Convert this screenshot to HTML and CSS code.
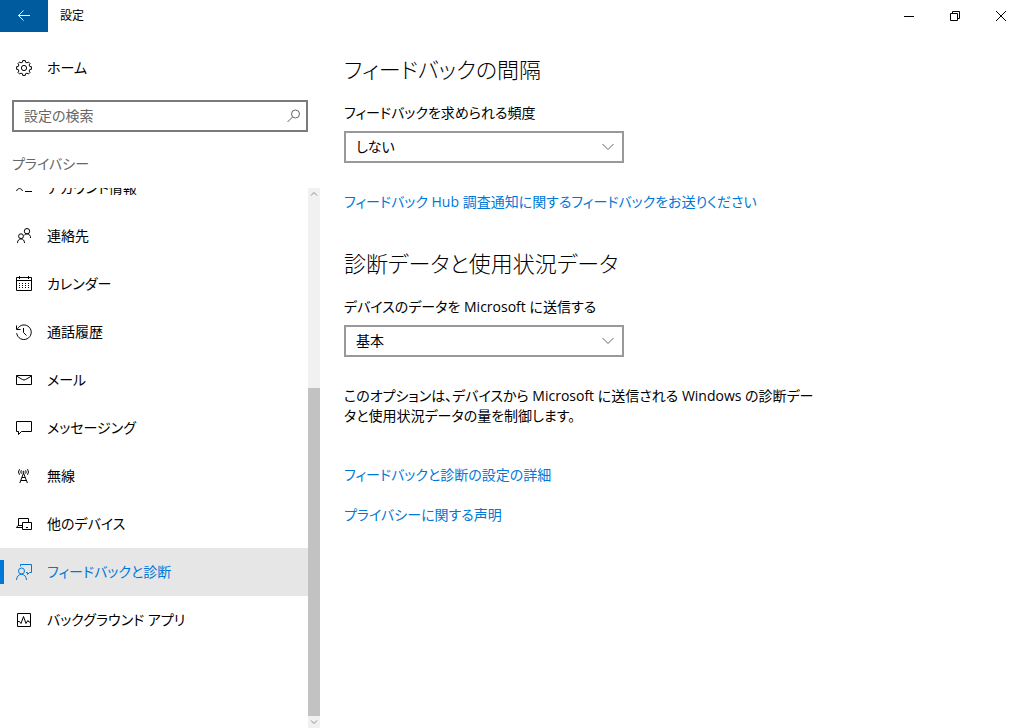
FILE: index.html
```html
<!DOCTYPE html>
<html lang="ja">
<head>
    <meta charset="UTF-8">
    <meta name="viewport" content="width=device-width, initial-scale=1.0">
    <title>設定</title>
    <link rel="stylesheet" href="styles.css">
</head>
<body>
    <header class="titlebar">
        <button type="button" class="back" aria-label="戻る">
            <svg width="16" height="16" viewBox="0 0 16 16"><path d="M14 7.5H2.5M7.5 2.5l-5 5 5 5"/></svg>
        </button>
        <h1 class="title">設定</h1>
        <div class="window-buttons">
            <button type="button" aria-label="最小化">
                <svg width="10" height="10" viewBox="0 0 10 10"><path d="M0 5.5h10"/></svg>
            </button>
            <button type="button" aria-label="元に戻す">
                <svg width="10" height="10" viewBox="0 0 10 10"><path d="M.5 2.5h7v7h-7zM2.5 2V.5h7v7H8"/></svg>
            </button>
            <button type="button" aria-label="閉じる">
                <svg width="10" height="10" viewBox="0 0 10 10"><path d="M0 0l10 10M10 0L0 10"/></svg>
            </button>
        </div>
    </header>

    <div class="layout">
        <aside class="sidebar">
            <a class="nav-item home" href="#">
                <svg class="icon" viewBox="0 0 16 16"><path d="M15.4 6.7V9.3L13.8 9.5 13.1 11.1 14.1 12.3 12.3 14.1 11.1 13.1 9.5 13.8 9.3 15.4H6.7L6.5 13.8 4.9 13.1 3.7 14.1 1.9 12.3 2.9 11.1 2.2 9.5.6 9.3V6.7L2.2 6.5 2.9 4.9 1.9 3.7 3.7 1.9 4.9 2.9 6.5 2.2 6.7.6H9.3L9.5 2.2 11.1 2.9 12.3 1.9 14.1 3.7 13.1 4.9 13.8 6.5Z"/><circle cx="8" cy="8" r="2.6"/></svg>
                <span>ホーム</span>
            </a>

            <form class="search">
                <input type="text" placeholder="設定の検索" aria-label="設定の検索">
                <button type="submit" aria-label="検索">
                    <svg width="14" height="14" viewBox="0 0 14 14"><circle cx="8.5" cy="5" r="4"/><path d="M5.6 7.9L.5 13"/></svg>
                </button>
            </form>

            <h2 class="group-title">プライバシー</h2>

            <div class="nav-area">
                <nav class="nav-list">
                    <a class="nav-item" href="#">
                        <svg class="icon" viewBox="0 0 16 16"><circle cx="3.5" cy="5" r="2.5"/><path d="M.5 11C1.5 7.8 5.5 7.8 6.5 11M9 3.5h7M9 7.5h7M9 11.5h7"/></svg>
                        <span>アカウント情報</span>
                    </a>
                    <a class="nav-item" href="#">
                        <svg class="icon" viewBox="0 0 16 16"><circle cx="5" cy="8.2" r="2.4"/><path d="M1.5 15C1.5 9.5 8.5 9.5 8.5 15"/><circle cx="11" cy="3.2" r="2.7"/><path d="M8 7.5C9.5 5.2 14.5 5 14.6 10"/></svg>
                        <span>連絡先</span>
                    </a>
                    <a class="nav-item" href="#">
                        <svg class="icon" viewBox="0 0 16 16"><path d="M.5 1.5h15v13H.5zM.5 4.5h15M3.5 0v3M12.5 0v3"/><path stroke-dasharray="1 2" d="M3 7.5h10M3 9.5h10M3 11.5h10"/></svg>
                        <span>カレンダー</span>
                    </a>
                    <a class="nav-item" href="#">
                        <svg class="icon" viewBox="0 0 16 16"><path d="M1.5 4.8A7.3 7.3 0 1 1 .7 9.2M.5 1.5v4h4M7.5 4v4.5l3 3"/></svg>
                        <span>通話履歴</span>
                    </a>
                    <a class="nav-item" href="#">
                        <svg class="icon" viewBox="0 0 16 16"><path d="M.5 3.5h15v9H.5zM.5 4L6.5 7.6Q8 8.3 9.5 7.6L15.5 4"/></svg>
                        <span>メール</span>
                    </a>
                    <a class="nav-item" href="#">
                        <svg class="icon" viewBox="0 0 16 16"><path d="M.5 1.5h15v10H5.5l-3 3v-3h-2z"/></svg>
                        <span>メッセージング</span>
                    </a>
                    <a class="nav-item" href="#">
                        <svg class="icon" viewBox="0 0 16 16"><path d="M7.5 5L3.8 15M7.5 5l3.9 10M6 9.5h3M5 12.5h5.5M3.5 1.2Q1.5 4 3.5 6.8M11.5 1.2Q13.5 4 11.5 6.8M5.4 2.3Q4.2 4 5.4 5.7M9.6 2.3Q10.8 4 9.6 5.7"/><circle cx="7.5" cy="4" r=".7"/></svg>
                        <span>無線</span>
                    </a>
                    <a class="nav-item" href="#">
                        <svg class="icon" viewBox="0 0 16 16"><path d="M2.5 9V2.5h10V6M6 9.5H2L.5 11.5H6M6.5 6.5h9v7h-9zM10 11.5h2"/></svg>
                        <span>他のデバイス</span>
                    </a>
                    <a class="nav-item active" href="#" aria-current="page">
                        <svg class="icon" viewBox="0 0 16 16"><circle cx="5.5" cy="7" r="3"/><path d="M.5 16C.8 8.4 10.2 8.4 10.5 16M4.5 2.5v-2h11v8h-2l-2 2v-2h-1.5"/></svg>
                        <span>フィードバックと診断</span>
                    </a>
                    <a class="nav-item" href="#">
                        <svg class="icon" viewBox="0 0 16 16"><path d="M1.5 1.5h13v13h-13zM2 9.5h1.5l1.5 2 2.5-7 2.5 7 1.8-3 1 1.5H14"/></svg>
                        <span>バックグラウンド アプリ</span>
                    </a>
                </nav>
                <div class="scrollbar" aria-hidden="true">
                    <svg class="scroll-arrow" viewBox="0 0 12 12"><path d="M3 7.5l3-3 3 3"/></svg>
                    <div class="scroll-track">
                        <div class="scroll-thumb"></div>
                    </div>
                    <svg class="scroll-arrow" viewBox="0 0 12 12"><path d="M3 4.5l3 3 3-3"/></svg>
                </div>
            </div>
        </aside>

        <main class="content">
            <section>
                <h2>フィードバックの間隔</h2>
                <label for="frequency">フィードバックを求められる頻度</label>
                <div class="dropdown">
                    <select id="frequency">
                        <option>しない</option>
                    </select>
                    <svg class="chevron" viewBox="0 0 12 8"><path d="M.5 1L6 6.5 11.5 1"/></svg>
                </div>
                <a class="link spaced" href="#">フィードバック Hub 調査通知に関するフィードバックをお送りください</a>
            </section>

            <section>
                <h2>診断データと使用状況データ</h2>
                <label for="device-data">デバイスのデータを Microsoft に送信する</label>
                <div class="dropdown">
                    <select id="device-data">
                        <option>基本</option>
                    </select>
                    <svg class="chevron" viewBox="0 0 12 8"><path d="M.5 1L6 6.5 11.5 1"/></svg>
                </div>
                <p class="spaced">このオプションは、デバイスから Microsoft に送信される Windows の診断デー<br>タと使用状況データの量を制御します。</p>
            </section>

            <div class="more-links">
                <a class="link" href="#">フィードバックと診断の設定の詳細</a>
                <a class="link" href="#">プライバシーに関する声明</a>
            </div>
        </main>
    </div>
</body>
</html>
```
FILE: styles.css
```css
* {
    box-sizing: border-box;
}
body {
    display: flex;
    flex-direction: column;
    height: 100vh;
    margin: 0;
    overflow: hidden;
    background-color: #fff;
    color: #000;
    font-family: "Open Sans", "Noto Sans CJK JP", sans-serif;
    font-size: 14px;
    line-height: 20px;
    font-feature-settings: "palt";
}
h1,
h2,
p {
    margin: 0;
    font-weight: 400;
}
a {
    color: inherit;
    text-decoration: none;
}
button {
    padding: 0;
    border: none;
    background: none;
    color: inherit;
}
input,
select {
    color: inherit;
    font: inherit;
    font-feature-settings: inherit;
}
svg {
    display: block;
    flex: none;
    fill: none;
    stroke: currentColor;
    stroke-width: 1;
}

/* title bar */
.titlebar {
    display: flex;
    flex: none;
    align-items: center;
    height: 32px;
}
.back {
    display: flex;
    align-items: center;
    justify-content: center;
    width: 48px;
    height: 32px;
    background-color: #005a9e;
    color: #fff;
}
.title {
    margin-left: 12px;
    font-size: 12px;
}
.window-buttons {
    display: flex;
    margin-left: auto;
}
.window-buttons button {
    display: flex;
    align-items: center;
    justify-content: center;
    width: 46px;
    height: 32px;
}

.layout {
    display: flex;
    flex: 1;
    min-height: 0;
}

/* sidebar */
.sidebar {
    display: flex;
    flex: none;
    flex-direction: column;
    width: 320px;
    padding-top: 12px;
}
.nav-item {
    display: flex;
    flex: none;
    align-items: center;
    gap: 15px;
    height: 48px;
    padding: 0 16px;
    white-space: nowrap;
}
.icon {
    width: 16px;
    height: 16px;
}
.search {
    display: flex;
    flex: none;
    height: 32px;
    margin: 8px 12px 0;
    border: 2px solid #7a7a7a;
}
.search input {
    flex: 1;
    min-width: 0;
    padding: 0 0 0 10px;
    border: none;
    outline: none;
    background: none;
}
.search input::placeholder {
    color: #666;
    opacity: 1;
}
.search button {
    display: flex;
    align-items: center;
    justify-content: center;
    width: 24px;
    color: #666;
}
.group-title {
    margin: 22px 12px 14px;
    color: #666;
    font-size: 14px;
}
.nav-area {
    display: flex;
    flex: 1;
    min-height: 0;
    overflow: hidden;
}
/* list is scrolled half a row past its first item */
.nav-list {
    display: flex;
    flex: 1;
    flex-direction: column;
    margin-top: -24px;
}
.active {
    padding-left: 0;
    background-color: #e6e6e6;
    color: #0078d7;
}
.active::before {
    content: "";
    width: 4px;
    height: 24px;
    margin-right: -3px;
    background-color: #0078d7;
}
.scrollbar {
    display: flex;
    flex-direction: column;
    width: 12px;
    background-color: #f1f1f1;
}
.scroll-arrow {
    width: 12px;
    height: 12px;
    color: #8a8a8a;
}
.scroll-track {
    display: flex;
    flex: 1;
    flex-direction: column;
}
.scroll-track::before {
    content: "";
    flex: 4;
}
.scroll-thumb {
    flex: 7;
    background-color: #c2c2c2;
}

/* content */
.content {
    flex: 1;
    min-width: 0;
    padding: 19px 24px;
}
.content section + section {
    margin-top: 33px;
}
.content h2 {
    margin-bottom: 16px;
    font-size: 22px;
    font-weight: 300;
    line-height: 36px;
}
.content label {
    display: block;
    margin-bottom: 8px;
}
.dropdown {
    position: relative;
    width: 280px;
}
.dropdown select {
    display: block;
    width: 100%;
    height: 32px;
    padding: 0 32px 0 10px;
    border: 2px solid #999;
    border-radius: 0;
    outline: none;
    background-color: #fff;
    appearance: none;
}
.chevron {
    position: absolute;
    top: 12px;
    right: 10px;
    width: 12px;
    height: 8px;
    color: #666;
    pointer-events: none;
}
.link {
    display: block;
    color: #0078d7;
}
.spaced {
    margin-top: 29px;
}
.more-links {
    display: flex;
    flex-direction: column;
    align-items: flex-start;
    gap: 20px;
    margin-top: 39px;
}
```
